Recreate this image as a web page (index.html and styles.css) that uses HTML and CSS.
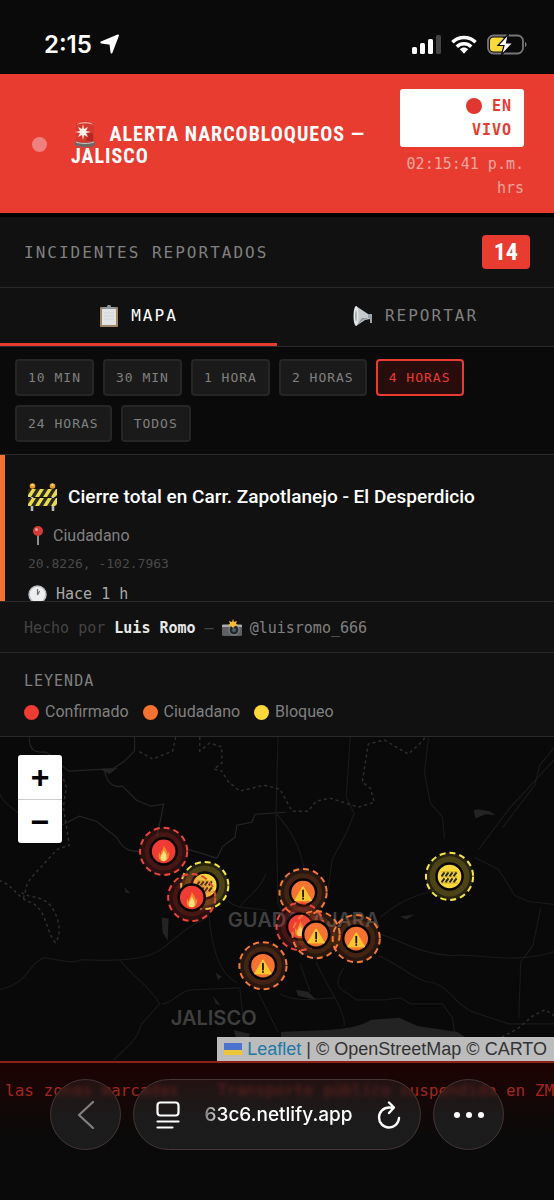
FILE: index.html
```html
<!DOCTYPE html>
<html lang="es">

<head>
    <meta charset="UTF-8">
    <meta name="viewport" content="width=device-width, initial-scale=1.0">
    <title>Alerta Narcobloqueos — Jalisco</title>
    <link rel="stylesheet" href="styles.css">
</head>

<body>

    <!-- iconos -->
    <svg class="sprite" aria-hidden="true">
        <symbol id="i-barrier" viewBox="0 0 30 30">
            <path d="M4 8v21M25 8v21" stroke="#b9b9b4" stroke-width="2.6" />
            <path d="M0 7h29v8H0zM0 16h29v8H0z" fill="#2b2a1c" />
            <path d="M0 13l4-6h4l-5 8H0zM7 15l5-8h4l-5 8zM15 15l5-8h4l-5 8zM23 15l5-8h1v6l-2 2zM0 22l4-6h4l-5 8H0zM7 24l5-8h4l-5 8zM15 24l5-8h4l-5 8zM23 24l5-8h1v6l-2 2z" fill="#e9dc4c" />
            <circle cx="4.500" cy="4" r="2.800" fill="#f39a21" />
            <circle cx="24.500" cy="4" r="2.800" fill="#f39a21" />
            <circle cx="4.500" cy="3" r="1.200" fill="#ffe08a" />
            <circle cx="24.500" cy="3" r="1.200" fill="#ffe08a" />
        </symbol>
        <symbol id="i-stripes" viewBox="0 0 18 14">
            <path d="M1 6l3-4M5 6l3-4M9 6l3-4M13 6l3-4M1 12l3-4M5 12l3-4M9 12l3-4M13 12l3-4" stroke="#2c2a12" stroke-width="2" />
            <path d="M1 6.500h16M1 12.500h16M1 1.500h16" stroke="#8a7c22" stroke-width=".5" />
        </symbol>
        <symbol id="i-fire" viewBox="0 0 12 16">
            <path d="M6 0c1 3 4 5 4 9 1-1 1-2 1-3 1 2 1 4 0 6-1 3-3 4-5 4s-5-1-5-5c0-2 0-3 1-4 0 1 0 2 1 3 0-4 3-6 3-10z" fill="#f98a2b" />
            <path d="M6 5c1 2 3 4 3 7.500 0 2-1 3.500-3 3.500s-3-1.500-3-3.500C3 10 5 9 6 5z" fill="#ffe07c" />
        </symbol>
        <symbol id="i-warn" viewBox="0 0 18 16">
            <path d="M9 1.500L17 15H1z" fill="#fbc62f" stroke="#fbc62f" stroke-width="1.500" stroke-linejoin="round" />
            <path d="M9 5v6" stroke="#1b1505" stroke-width="1.800" stroke-linecap="round" />
            <circle cx="9" cy="13.300" r="1" fill="#1b1505" />
        </symbol>
        <symbol id="m-red" viewBox="-26 -26 52 52">
            <circle r="23.500" fill="#ee3b33" fill-opacity=".15" />
            <circle r="19" fill="#ee3b33" fill-opacity=".15" />
            <circle r="23.500" fill="none" stroke="#ee453a" stroke-width="2" stroke-dasharray="6 4" />
            <circle r="13" fill="#ee3b33" stroke="#0a0505" stroke-width="2.500" />
            <use href="#i-fire" x="-6" y="-6" width="12" height="16" />
        </symbol>
        <symbol id="m-orange" viewBox="-26 -26 52 52">
            <circle r="23.500" fill="#f47836" fill-opacity=".13" />
            <circle r="19" fill="#f47836" fill-opacity=".14" />
            <circle r="23.500" fill="none" stroke="#f47836" stroke-width="2" stroke-dasharray="6 4" />
            <circle r="13" fill="#f47332" stroke="#0a0505" stroke-width="2.500" />
            <use href="#i-warn" x="-9" y="-7" width="18" height="16" />
        </symbol>
        <symbol id="m-yellow" viewBox="-26 -26 52 52">
            <circle r="23.500" fill="#f7e03c" fill-opacity=".12" />
            <circle r="20" fill="#f7e03c" fill-opacity=".18" />
            <circle r="23.500" fill="none" stroke="#f5e540" stroke-width="2" stroke-dasharray="6 4" />
            <circle r="13" fill="#fad83c" stroke="#0a0505" stroke-width="2.500" />
            <use href="#i-stripes" x="-9" y="-6" width="18" height="14" />
        </symbol>
    </svg>

    <div class="statusbar">
        <div class="status-left">
            <span>2:15</span>
            <svg width="20" height="20" viewBox="0 0 20 20"><path d="M18 1.500L11.500 18.500 10.500 9.800 1.300 8.500z" fill="#fff" stroke="#fff" stroke-width="2" stroke-linejoin="round" /></svg>
        </div>
        <div class="status-right">
            <svg width="29" height="19" viewBox="0 0 29 19"><rect y="12" width="5" height="7" rx="1.500" fill="#fff" /><rect x="8" y="8" width="5" height="11" rx="1.500" fill="#fff" /><rect x="16" y="4" width="5" height="15" rx="1.500" fill="#fff" /><rect x="24" width="5" height="19" rx="1.500" fill="#444" /></svg>
            <svg width="26" height="19" viewBox="0 0 26 19"><g fill="none" stroke="#fff" stroke-width="3.600"><path d="M1.500 7.200a16.500 16.500 0 0 1 23 0" /><path d="M5.800 11.700a10.300 10.300 0 0 1 14.400 0" /></g><path d="M13 12.600c1.600 0 3 .6 4.100 1.600L13 18.800l-4.100-4.600c1.100-1 2.500-1.600 4.100-1.600z" fill="#fff" /></svg>
            <svg width="40" height="21" viewBox="0 0 40 21"><rect x="1" y="1.500" width="35" height="18" rx="5.500" fill="none" stroke="#77777a" stroke-width="1.800" /><path d="M38 8c2 .6 2 4.400 0 5z" fill="#77777a" /><rect x="3" y="3.500" width="15" height="14" rx="3.500" fill="#fbd93a" /><path d="M21.500 0L11 11.500h6L14.500 21 26 9h-6.500z" fill="#fff" stroke="#0a0a0a" stroke-width="1.200" /></svg>
        </div>
    </div>

    <header class="header">
        <span class="pulse"></span>
        <h1 class="title">
            <svg width="24" height="28" viewBox="0 0 24 28" role="img" aria-label="sirena"><path d="M3 22V5c0-5 18-5 18 0v17z" fill="#d5382d" /><path d="M4 5c0-4 16-4 16 0-3-2-13-2-16 0z" fill="#ef9d92" /><path d="M15 13h5v8h-7z" fill="#b32a22" /><path d="M2 21c5 2 15 2 20 0v4c-3 3-17 3-20 0z" fill="#6d6766" /><path d="M3 22c5 2 13 2 18 0" stroke="#c9c3c2" fill="none" /><path d="M10 4l1 5 4-2-2 4 5 1-5 1 2 4-4-2-1 5-1-5-4 2 2-4-5-1 5-1-2-4 4 2z" fill="#fff0ea" /></svg>
            ALERTA NARCOBLOQUEOS — JALISCO
        </h1>
        <div class="live">
            <div class="live-badge"><span class="live-dot"></span> EN VIVO</div>
            <div class="clock">02:15:41 p.m. hrs</div>
        </div>
    </header>

    <section class="count">
        <h2 class="count-label">INCIDENTES REPORTADOS</h2>
        <span class="count-num">14</span>
    </section>

    <nav class="tabs">
        <button class="tab active">
            <svg width="20" height="22" viewBox="0 0 20 22"><rect x="1" y="2" width="18" height="20" rx="1" fill="#a08564" /><rect x="3" y="4" width="14" height="16" fill="#e2e3e4" /><path d="M4 2h4c0-3 4-3 4 0h4v2H4z" fill="#8e979c" /><path d="M5 8h10M5 11h10M5 14h10" stroke="#d2d4d6" /></svg>
            MAPA
        </button>
        <button class="tab">
            <svg width="20" height="22" viewBox="0 0 20 22"><path d="M3 1l12 8 4 0v9h-2v-4l-5 1-9 6z" fill="#c5cacd" /><path d="M15 9l4 0v9h-2v-5h-2z" fill="#98a3ab" /><path d="M9 13l7 0-6 2-6 5z" fill="#8d969b" /><ellipse cx="3" cy="11" rx="2.500" ry="10" fill="#e6e8e9" /><ellipse cx="3" cy="11" rx="1" ry="6" fill="#a9b0b4" /></svg>
            REPORTAR
        </button>
    </nav>

    <div class="filters">
        <button class="filter">10 MIN</button>
        <button class="filter">30 MIN</button>
        <button class="filter">1 HORA</button>
        <button class="filter">2 HORAS</button>
        <button class="filter active">4 HORAS</button>
        <button class="filter">24 HORAS</button>
        <button class="filter">TODOS</button>
    </div>

    <main class="list">
        <article class="card">
            <h3 class="card-title"><svg width="30" height="30"><use href="#i-barrier" /></svg> Cierre total en Carr. Zapotlanejo - El Desperdicio</h3>
            <p class="card-source">
                <svg width="20" height="20" viewBox="0 0 20 20"><path d="M10 8v11" stroke="#aab0b3" stroke-width="1.600" /><circle cx="10" cy="5" r="5" fill="#d63a34" /><circle cx="8.500" cy="3.500" r="1.500" fill="#f7a29b" /></svg>
                Ciudadano
            </p>
            <p class="card-coords">20.8226, -102.7963</p>
            <p class="card-time">
                <svg width="19" height="19" viewBox="0 0 19 19"><circle cx="9.500" cy="9.500" r="8.500" fill="#eceef0" stroke="#b9bdc2" stroke-width="1.500" /><path d="M9.500 10V4M9.500 10l2-4" stroke="#6b6f74" stroke-width="1.200" /></svg>
                Hace 1 h
            </p>
        </article>
    </main>

    <div class="credits">
        <span>Hecho por <strong>Luis Romo</strong> —</span>
        <svg width="20" height="18" viewBox="0 0 20 18"><rect y="5" width="20" height="12" rx="1.500" fill="#5c6062" /><path d="M0 6h20v2H0z" fill="#a9adaf" /><circle cx="12" cy="11" r="5" fill="#24282a" stroke="#8f9597" /><circle cx="12" cy="11" r="2" fill="#52626b" /><path d="M11 0l1 3 3-1-1 3 2 1-3 1-2 2-2-2-3-1 2-1-1-3 3 1z" fill="#f8bd2f" /></svg>
        <a href="#">@luisromo_666</a>
    </div>

    <section class="legend">
        <h2 class="legend-title">LEYENDA</h2>
        <ul class="legend-items">
            <li><span class="dot red"></span>Confirmado</li>
            <li><span class="dot orange"></span>Ciudadano</li>
            <li><span class="dot yellow"></span>Bloqueo</li>
        </ul>
    </section>

    <div class="map">
        <svg class="map-canvas" viewBox="0 0 554 323" preserveAspectRatio="xMidYMid slice">
            <!-- carreteras -->
            <g class="roads">
                <path class="main" d="M30 0c0 12 4 16 16 15 12 6 14 14 24 19l35-2 8 0 12-8 10-10V0" />
                <path class="main" d="M105 33c2 12 8 18 18 16l14 14 14 6 13-2-3 15-4 17" />
                <path d="M0 55c4 12 14 15 20 22" />
                <path class="main" d="M62 88l18-9 17 5 20 16c8 14 14 14 23 14M188 112l14 4 15 5 6-12 12-9 2-12 15-3 3-8 31-2" />
                <path d="M0 252c30-6 28-26 45-32 24 4 30 6 37 2 40 2 70 0 84-14 16-12 20-18 42-28" />
                <path d="M209 175c2 30 8 60 28 70M228 163c10 10 24 6 38 10M120 222c16 20 30 26 40 44l-18 20c-4 14-10 20-28 36M162 266c12 0 18-14 30-14l48-2" />
                <path d="M276 76c16 18 24 34 28 55M350 0l-4 60 8 16-8 20-14 26-4 30" />
                <path d="M428 0l-4 36 6 30 12 14 2 22M478 112l30-40 46-50M554 10l-15 18-5 20-32 42M474 120l24 12 16 26 14 6 26 3M380 180c16-14 28-20 56-28M540 170l-8 38-12 16-2 56" />
                <path d="M378 196c26 8 40 20 72 22 20-4 60 10 104-4M378 218c20 8 30 20 48 26 24 2 26 22 46 30l36 12 46 0M344 230c-10 14-8 20 4 26l8 6h28l16-2 10 6h32l10 14 2 14" />
                <path d="M300 226l10 28M316 224c10 24 30 50 28 64M280 256c14 8 30 6 54 4M240 252l4 34M258 254l20 40" />
                <path d="M278 0l-2 76 2 90 6 12M240 170c8-14 20-16 26-34" />
            </g>
            <g class="limits">
                <path d="M176 0l-3 14-20 8-14-8M200 0v14l10-8 12 4v16l-8 6 8 2 6 10 12 10 24-6 16 4 12 22 16 0 8-10 14-3 28 9 16-5-4-14-8-6 6-38 16-4 24 14 15-14 6-12" />
                <path d="M62 36l5 14-3 20 6 38-12 4-24 26-6 8-4 16M0 143c14 4 18 18 32 22 16 8 14 28 24 40 8-10 2-28-4-36-10-12-22-8-30-14" />
                <path d="M554 278l-10-6-12 6-14 12-18 10" />
            </g>
            <!-- lagos -->
            <g class="water">
                <path d="M281 294c40-2 70 0 90-12l28-2 18 8 40 6 18 12v17H281z" />
                <path d="M162 180l7 1-1 22-5-8zM125 150l6 6-5-1zM100 32l18-1-8 6zM213 258l8 10-5-2zM216 235l6 4-4 3zM234 292l16 4-6 16-6-5zM296 252l12 2 8 8-18-4zM400 179l14-2-8 5zM473 73l4-1 12 2 6 4-10-1-10 4z" />
            </g>
            <text class="place" x="228" y="189">GUADALAJARA</text>
            <text class="place" x="171" y="287">JALISCO</text>
            <use href="#m-yellow" x="179" y="122" width="52" height="52" />
            <use href="#m-red" x="138" y="88" width="52" height="52" />
            <use href="#m-red" x="166" y="134" width="52" height="52" />
            <use href="#m-orange" x="277" y="129" width="52" height="52" />
            <use href="#m-red" x="274" y="163" width="52" height="52" />
            <use href="#m-orange" x="330" y="175" width="52" height="52" />
            <use href="#m-orange" x="290" y="171" width="52" height="52" />
            <use href="#m-orange" x="237" y="202" width="52" height="52" />
            <use href="#m-yellow" x="423" y="113" width="52" height="52" />
        </svg>
        <div class="zoom">
            <button aria-label="Acercar">+</button>
            <button aria-label="Alejar">−</button>
        </div>
        <div class="attribution">
            <span class="flag"></span>
            <a href="#">Leaflet</a> | © OpenStreetMap © CARTO
        </div>
    </div>

    <footer class="bottom">
        <div class="ticker">las zonas marcadas &nbsp;&nbsp; Transporte público suspendido en ZM</div>
        <div class="browser">
            <button class="glass round" aria-label="Atrás">
                <svg width="16" height="28" viewBox="0 0 16 28"><path d="M15 1L1 14l14 13" fill="none" stroke="#858080" stroke-width="2.200" stroke-linecap="round" stroke-linejoin="round" /></svg>
            </button>
            <div class="glass address">
                <button aria-label="Opciones de página">
                    <svg width="24" height="28" viewBox="0 0 24 28" fill="none" stroke="#fff" stroke-width="2.200" stroke-linecap="round"><rect x="1.500" y="1.500" width="21" height="13" rx="3" /><path d="M1.500 20.500h21M1.500 26.500h15" /></svg>
                </button>
                <input class="url" type="text" value="63c6.netlify.app" aria-label="Dirección">
                <button aria-label="Recargar">
                    <svg width="24" height="28" viewBox="0 0 24 28" fill="none" stroke="#fff" stroke-width="2.400" stroke-linecap="round" stroke-linejoin="round"><path d="M16 6.500h-4A10 10 0 1 0 22 17M12 1.500l5 5-5 5.500" /></svg>
                </button>
            </div>
            <button class="glass round" aria-label="Más">
                <svg width="30" height="6" viewBox="0 0 30 6" fill="#fff"><circle cx="3" cy="3" r="3" /><circle cx="15" cy="3" r="3" /><circle cx="27" cy="3" r="3" /></svg>
            </button>
        </div>
    </footer>

</body>

</html>
```
FILE: styles.css
```css
* {
    box-sizing: border-box;
    margin: 0;
    padding: 0;
}

body {
    display: flex;
    flex-direction: column;
    min-height: 100vh;
    background: #0a0a0a;
    color: #fff;
    font-family: "DejaVu Sans Mono", "Liberation Mono", monospace;
    font-size: 16px;
    overflow-x: hidden;
}

button,
input {
    font: inherit;
    color: inherit;
    background: none;
    border: none;
}

a {
    color: inherit;
    text-decoration: none;
}

svg {
    flex: none;
}

.sprite {
    position: absolute;
    width: 0;
    height: 0;
}

/* barra de estado */
.statusbar {
    display: flex;
    justify-content: space-between;
    align-items: center;
    height: 74px;
    padding: 14px 27px 0 44px;
}

.status-left,
.status-right {
    display: flex;
    align-items: center;
    gap: 8px;
}

.status-left {
    font: 600 24px Inter, sans-serif;
}

.status-right {
    gap: 10px;
}

/* encabezado */
.header {
    display: flex;
    align-items: center;
    gap: 24px;
    padding: 15px 30px 12px 32px;
    background: #e83c31;
    border-bottom: 1px solid #e83c31;
}

.pulse {
    flex: none;
    width: 15px;
    height: 15px;
    border-radius: 50%;
    background: #f08080;
}

.title {
    flex: 1;
    font: bold 20px/22px "Roboto Condensed", Roboto, sans-serif;
    letter-spacing: 1px;
}

.title svg {
    vertical-align: middle;
    margin: -6px 7px -4px 2px;
}

.live {
    width: 124px;
    font-size: 15px;
    line-height: 24px;
    text-align: right;
}

.live-badge {
    padding: 5px 12px 5px 60px;
    border-radius: 3px;
    background: #fff;
    color: #e83c31;
    font-weight: bold;
    letter-spacing: 1px;
}

.live-dot {
    display: inline-block;
    width: 16px;
    height: 16px;
    border-radius: 50%;
    background: #e0382e;
    vertical-align: -3px;
}

.clock {
    padding-top: 5px;
    color: #f5a59f;
}

/* contador */
.count {
    display: flex;
    justify-content: space-between;
    align-items: center;
    padding: 18px 24px;
    background: #111;
    border-top: 4px solid #000;
    border-bottom: 1px solid #2a2a2a;
}

.count-label {
    font-size: 16px;
    font-weight: normal;
    letter-spacing: 2px;
    color: #808080;
}

.count-num {
    padding: 0 12px;
    border-radius: 4px;
    background: #e83c31;
    font: bold 24px/34px "Roboto Condensed", Roboto, sans-serif;
}

/* pestañas */
.tabs {
    display: flex;
    background: #111;
    border-bottom: 1px solid #2a2a2a;
}

.tab {
    flex: 1;
    display: flex;
    justify-content: center;
    align-items: center;
    gap: 12px;
    height: 58px;
    border-bottom: 3px solid transparent;
    letter-spacing: 2px;
    color: #808080;
}

.tab.active {
    color: #fff;
    border-bottom-color: #e83c31;
}

/* filtros */
.filters {
    display: flex;
    flex-wrap: wrap;
    gap: 9px;
    padding: 12px 15px;
    border-bottom: 1px solid #2a2a2a;
}

.filter {
    padding: 0 11px;
    border: 2px solid #262626;
    border-radius: 4px;
    background: #1a1a1a;
    color: #808080;
    font-size: 13px;
    line-height: 33px;
    letter-spacing: 1px;
}

.filter.active {
    border-color: #e83c31;
    background: #290d0c;
    color: #e83c31;
}

/* incidentes */
.list {
    max-height: 147px;
    overflow: hidden;
    background: #111;
    border-bottom: 1px solid #2a2a2a;
}

.card {
    padding: 25px 24px 24px 23px;
    border-left: 5px solid #f47332;
}

.card-title {
    display: flex;
    align-items: center;
    gap: 10px;
    font: 500 19px/34px Roboto, sans-serif;
}

.card-source {
    display: flex;
    align-items: center;
    gap: 5px;
    padding-top: 8px;
    color: #808080;
    font: 16px/28px Roboto, sans-serif;
}

.card-coords {
    color: #4a4a4a;
    font-size: 13px;
    line-height: 28px;
}

.card-time {
    display: flex;
    align-items: center;
    gap: 9px;
    line-height: 32px;
    color: #a8a8a8;
    font-size: 15px;
}

.credits {
    display: flex;
    align-items: center;
    gap: 8px;
    padding: 2px 24px 0;
    background: #111;
    border-bottom: 1px solid #2a2a2a;
    color: #444;
    font-size: 15px;
    line-height: 48px;
}

.credits strong {
    color: #e8e8e8;
}

.credits a {
    color: #808080;
}

.legend {
    padding: 17px 24px 10px;
    background: #111;
    border-bottom: 1px solid #2a2a2a;
    color: #808080;
}

.legend-title {
    font-size: 15px;
    line-height: 22px;
    font-weight: normal;
    letter-spacing: 1px;
}

.legend-items {
    display: flex;
    gap: 14px;
    list-style: none;
    padding-top: 6px;
    font: 16px/28px Roboto, sans-serif;
}

.legend-items li {
    display: flex;
    align-items: center;
    gap: 6px;
}

.dot {
    width: 15px;
    height: 15px;
    border-radius: 50%;
}

.red {
    background: #ee3b33;
}

.orange {
    background: #f47332;
}

.yellow {
    background: #fad83c;
}

/* mapa */
.map {
    flex: 1;
    position: relative;
    min-height: 320px;
    background: #090909;
}

.map-canvas {
    position: absolute;
    width: 100%;
    height: 100%;
}

.roads {
    fill: none;
    stroke: #191919;
    stroke-width: 1.2;
}

.roads .main {
    stroke: #242424;
}

.limits {
    fill: none;
    stroke: #303030;
    stroke-width: 1.4;
    stroke-dasharray: 3 3;
}

.water {
    fill: #232323;
}

.place {
    fill: #3f3f3f;
    font: 600 20px Inter, sans-serif;
}

.zoom {
    position: absolute;
    top: 18px;
    left: 18px;
    width: 44px;
    border-radius: 3px;
    background: #fff;
    overflow: hidden;
}

.zoom button {
    display: block;
    width: 100%;
    height: 44px;
    color: #000;
    font: bold 32px/44px "Liberation Sans", sans-serif;
}

.zoom button + button {
    border-top: 1px solid #ccc;
}

.attribution {
    position: absolute;
    right: 0;
    bottom: 0;
    padding: 0 7px;
    background: #bcbcbc;
    color: #333;
    font: 18px/24px "Liberation Sans", sans-serif;
}

.attribution a {
    color: #2278a6;
}

.flag {
    display: inline-block;
    width: 18px;
    height: 12px;
    background: linear-gradient(#4a74d0 60%, #edc63a 60%);
}

/* cinta y barra del navegador */
.bottom {
    position: relative;
    height: 139px;
    border-top: 2px solid #8e2019;
    background: linear-gradient(#1d0303, #170606 30px, #0a0a0a 75px);
    overflow: hidden;
}

.ticker {
    padding: 16px 0 16px 5px;
    line-height: 24px;
    color: #a3251e;
    white-space: nowrap;
}

.browser {
    position: absolute;
    top: 16px;
    left: 0;
    right: 0;
    display: flex;
    justify-content: center;
    gap: 12px;
    padding: 0 50px;
}

.glass {
    height: 71px;
    border: 1px solid #463636;
    border-radius: 36px;
    background: linear-gradient(rgba(50, 34, 34, 0.45), rgba(29, 29, 29, 0.95) 60%);
    backdrop-filter: blur(2px);
}

.round {
    flex: none;
    display: flex;
    justify-content: center;
    align-items: center;
    width: 71px;
}

.address {
    flex: 1;
    min-width: 0;
    display: flex;
    align-items: center;
    padding: 0 19px 0 22px;
}

.address button {
    flex: none;
    height: 28px;
}

.url {
    flex: 1;
    width: 100%;
    min-width: 0;
    text-align: center;
    font: 500 19px Inter, sans-serif;
    mask-image: linear-gradient(90deg, rgba(0, 0, 0, 0.3) 20px, #000 44px);
}
```
